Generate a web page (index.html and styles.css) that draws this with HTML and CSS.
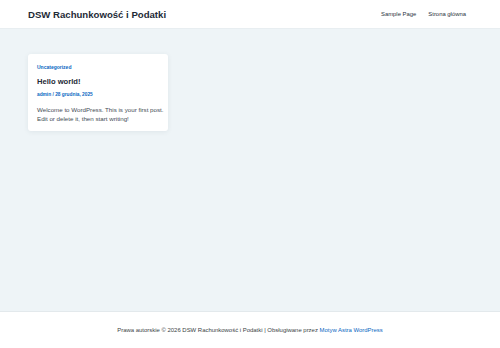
FILE: index.html
```html
<!DOCTYPE html>
<html lang="pl">
<head>
    <meta charset="UTF-8">
    <meta name="viewport" content="width=device-width, initial-scale=1.0">
    <title>DSW Rachunkowość i Podatki</title>
    <link rel="stylesheet" href="styles.css">
</head>
<body>
    <header class="site-header">
        <a class="site-title" href="#">DSW Rachunkowość i Podatki</a>
        <nav class="main-nav">
            <a href="#">Sample Page</a>
            <a href="#">Strona główna</a>
        </nav>
    </header>

    <main class="site-content">
        <article class="post-card">
            <a class="post-cat" href="#">Uncategorized</a>
            <h2 class="post-title">Hello world!</h2>
            <div class="post-meta"><a href="#">admin</a> / 28 grudnia, 2025</div>
            <p class="post-excerpt">Welcome to WordPress. This is your first post. Edit or delete it, then start writing!</p>
        </article>
    </main>

    <footer class="site-footer">
        <p>Prawa autorskie © 2026 DSW Rachunkowość i Podatki | Obsługiwane przez <a href="#">Motyw Astra WordPress</a></p>
    </footer>
</body>
</html>
```

FILE: styles.css
```css
* {
    box-sizing: border-box;
}

body {
    margin: 0;
    height: 348px;
    display: flex;
    flex-direction: column;
    font-family: "Liberation Sans", Arial, sans-serif;
    color: #3a3a3a;
    background-color: #eef4f7;
}

a {
    text-decoration: none;
}

.site-header {
    height: 29px;
    display: flex;
    align-items: center;
    justify-content: space-between;
    padding: 0 34px 0 28px;
    background-color: #ffffff;
    border-bottom: 1px solid #e8eef1;
}

.site-title {
    font-size: 9.6px;
    font-weight: bold;
    color: #1e2a36;
}

.main-nav {
    display: flex;
    gap: 12px;
}

.main-nav a {
    font-size: 5.9px;
    color: #2b3440;
}

.site-content {
    flex: 1;
    padding: 25px 28px;
}

.post-card {
    width: 140px;
    height: 77px;
    padding: 10px 4px 9px 9px;
    background-color: #ffffff;
    border-radius: 3px;
    box-shadow: 0 1px 5px rgba(40, 60, 80, 0.08);
}

.post-cat {
    display: block;
    font-size: 5px;
    font-weight: bold;
    color: #0a67c2;
}

.post-title {
    margin: 7px 0 6px;
    font-size: 7.6px;
    font-weight: bold;
    color: #1e2a36;
}

.post-meta {
    font-size: 4.8px;
    font-weight: bold;
    color: #0a67c2;
}

.post-meta a {
    color: #0a67c2;
}

.post-excerpt {
    margin: 8px 0 0;
    font-size: 6.2px;
    line-height: 9.3px;
    color: #444c55;
}

.site-footer {
    height: 37px;
    display: flex;
    align-items: center;
    justify-content: center;
    background-color: #ffffff;
    border-top: 1px solid #e3e9ec;
}

.site-footer p {
    margin: 0;
    font-size: 5.95px;
    color: #3a3f45;
}

.site-footer a {
    color: #0a67c2;
}
```
